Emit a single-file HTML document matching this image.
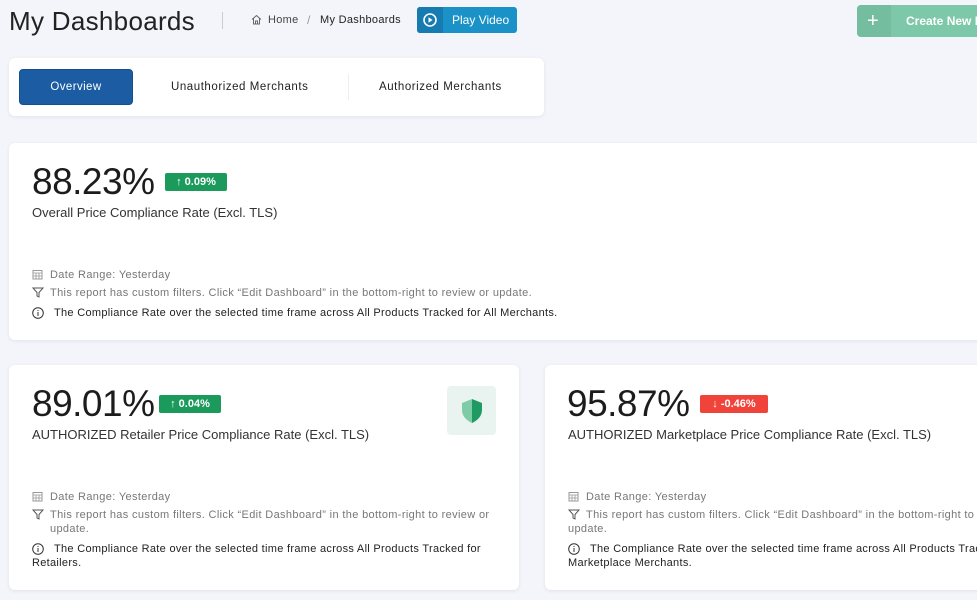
<!DOCTYPE html>
<html><head><style>
*{margin:0;padding:0;box-sizing:border-box}
body{width:977px;height:600px;overflow:hidden;background:#f4f5fa;font-family:"Liberation Sans",sans-serif;color:#222;position:relative}
.a{position:absolute;white-space:nowrap}
.card{position:absolute;background:#fff;border-radius:6px;box-shadow:0 1px 4px rgba(0,0,0,.08)}
.big{font-size:37px;color:#1c1c1c;letter-spacing:-0.5px}
.badge{position:absolute;height:18px;border-radius:2px;color:#fff;font-size:11px;font-weight:bold;line-height:18px;text-align:center;width:62px}
.sub{font-size:13px;color:#333}
.meta{font-size:11px;color:#777;letter-spacing:0.35px}
.info{font-size:11px;color:#222;letter-spacing:0.3px}
.tab{font-size:11.5px;letter-spacing:0.55px}
</style></head><body>
<div class="a" style="left:9px;top:6px;font-size:26px;color:#222;letter-spacing:0.3px">My Dashboards</div>
<div class="a" style="left:222px;top:12px;width:1px;height:17px;background:#ccc"></div>
<svg class="a" style="left:251px;top:14px" width="11" height="11" viewBox="0 0 11 11"><path d="M1 5.5L5.5 1.5 10 5.5M2.5 4.5V10h6V4.5M4.5 10V7h2v3" fill="none" stroke="#666" stroke-width="1"/></svg>
<div class="a" style="left:268px;top:14px;font-size:11px;color:#444;letter-spacing:0.3px">Home</div>
<div class="a" style="left:307px;top:13px;font-size:12px;color:#999">/</div>
<div class="a" style="left:320px;top:14px;font-size:11px;color:#222;letter-spacing:0.3px">My Dashboards</div>
<div class="a" style="left:417px;top:7px;width:100px;height:26px;border-radius:3px;background:#1a92c8;overflow:hidden">
<div style="position:absolute;left:0;top:0;width:26px;height:26px;background:#157bb0"></div>
<svg style="position:absolute;left:6px;top:6px" width="14" height="14" viewBox="0 0 14 14"><circle cx="7" cy="7" r="6" fill="none" stroke="#fff" stroke-width="1.6"/><path d="M5.5 4.3v5.4L9.6 7z" fill="#fff"/></svg>
<div style="position:absolute;left:35px;top:6px;font-size:12px;color:#fff">Play Video</div></div>
<div class="a" style="left:857px;top:5px;width:130px;height:32px;border-radius:4px;background:#7ec8aa;overflow:hidden">
<div style="position:absolute;left:0;top:0;width:34px;height:32px;background:#74bd9f"></div>
<div style="position:absolute;left:10px;top:5px;font-size:20px;color:#fff">+</div>
<div style="position:absolute;left:49px;top:9px;font-size:12px;font-weight:bold;color:#fff">Create New D</div></div>

<div class="card" style="left:9px;top:58px;width:535px;height:58px"></div>
<div class="a" style="left:19px;top:69px;width:114px;height:36px;background:#1b5ca2;border-radius:4px;border:1px solid #154e8c;color:#fff;font-size:11.5px;text-align:center;line-height:34px;letter-spacing:0.4px">Overview</div>
<div class="a tab" style="left:171px;top:81px">Unauthorized Merchants</div>
<div class="a" style="left:348px;top:74px;width:1px;height:26px;background:#eee"></div>
<div class="a tab" style="left:379px;top:81px">Authorized Merchants</div>

<div class="card" style="left:9px;top:143px;width:980px;height:197px"></div>
<div class="a big" style="left:32px;top:161px">88.23%</div>
<div class="badge" style="left:165px;top:173px;background:#1b9a5c">↑ 0.09%</div>
<div class="a sub" style="left:32px;top:205px">Overall Price Compliance Rate (Excl. TLS)</div>
<svg class="a" style="left:32px;top:269px" width="11" height="11" viewBox="0 0 11 11"><rect x="1" y="1.5" width="9" height="8.5" fill="none" stroke="#999"/><path d="M1 4h9M4 4v6M7 4v6M1 7h9" stroke="#999" stroke-width=".8"/></svg>
<div class="a meta" style="left:50px;top:269px">Date Range: Yesterday</div>
<svg class="a" style="left:32px;top:287px" width="12" height="11" viewBox="0 0 12 11"><path d="M1 1h10L7 5.5V10L5 9V5.5z" fill="none" stroke="#555"/></svg>
<div class="a meta" style="left:50px;top:287px">This report has custom filters. Click “Edit Dashboard” in the bottom-right to review or update.</div>
<svg class="a" style="left:32px;top:307px" width="12" height="12" viewBox="0 0 12 12"><circle cx="6" cy="6" r="5.3" fill="none" stroke="#333"/><path d="M6 5v4M6 3v1" stroke="#333"/></svg>
<div class="a info" style="left:54px;top:307px">The Compliance Rate over the selected time frame across All Products Tracked for All Merchants.</div>

<div class="card" style="left:9px;top:365px;width:510px;height:225px"></div>
<div class="a big" style="left:32px;top:383px">89.01%</div>
<div class="badge" style="left:159px;top:395px;background:#1b9a5c">↑ 0.04%</div>
<div class="a" style="left:447px;top:386px;width:49px;height:49px;border-radius:4px;background:#e9f4f0"></div>
<svg class="a" style="left:460px;top:398px" width="24" height="26" viewBox="0 0 24 26"><path d="M12 1L2 5v7c0 6 4.5 10.5 10 13z" fill="#7fcba7"/><path d="M12 1l10 4v7c0 6-4.5 10.5-10 13z" fill="#1e9a62"/></svg>
<div class="a sub" style="left:32px;top:427px">AUTHORIZED Retailer Price Compliance Rate (Excl. TLS)</div>
<svg class="a" style="left:32px;top:491px" width="11" height="11" viewBox="0 0 11 11"><rect x="1" y="1.5" width="9" height="8.5" fill="none" stroke="#999"/><path d="M1 4h9M4 4v6M7 4v6M1 7h9" stroke="#999" stroke-width=".8"/></svg>
<div class="a meta" style="left:50px;top:491px">Date Range: Yesterday</div>
<svg class="a" style="left:32px;top:509px" width="12" height="11" viewBox="0 0 12 11"><path d="M1 1h10L7 5.5V10L5 9V5.5z" fill="none" stroke="#555"/></svg>
<div class="a meta" style="left:50px;top:509px">This report has custom filters. Click “Edit Dashboard” in the bottom-right to review or</div>
<div class="a meta" style="left:50px;top:523px">update.</div>
<svg class="a" style="left:32px;top:543px" width="12" height="12" viewBox="0 0 12 12"><circle cx="6" cy="6" r="5.3" fill="none" stroke="#333"/><path d="M6 5v4M6 3v1" stroke="#333"/></svg>
<div class="a info" style="left:54px;top:543px">The Compliance Rate over the selected time frame across All Products Tracked for</div>
<div class="a info" style="left:32px;top:557px">Retailers.</div>

<div class="card" style="left:545px;top:365px;width:500px;height:225px"></div>
<div class="a big" style="left:567px;top:383px">95.87%</div>
<div class="badge" style="left:700px;top:395px;width:68px;background:#f0443a">↓ -0.46%</div>
<div class="a sub" style="left:568px;top:427px">AUTHORIZED Marketplace Price Compliance Rate (Excl. TLS)</div>
<svg class="a" style="left:568px;top:491px" width="11" height="11" viewBox="0 0 11 11"><rect x="1" y="1.5" width="9" height="8.5" fill="none" stroke="#999"/><path d="M1 4h9M4 4v6M7 4v6M1 7h9" stroke="#999" stroke-width=".8"/></svg>
<div class="a meta" style="left:586px;top:491px">Date Range: Yesterday</div>
<svg class="a" style="left:568px;top:509px" width="12" height="11" viewBox="0 0 12 11"><path d="M1 1h10L7 5.5V10L5 9V5.5z" fill="none" stroke="#555"/></svg>
<div class="a meta" style="left:586px;top:509px">This report has custom filters. Click “Edit Dashboard” in the bottom-right to review or</div>
<div class="a meta" style="left:568px;top:523px">update.</div>
<svg class="a" style="left:568px;top:543px" width="12" height="12" viewBox="0 0 12 12"><circle cx="6" cy="6" r="5.3" fill="none" stroke="#333"/><path d="M6 5v4M6 3v1" stroke="#333"/></svg>
<div class="a info" style="left:590px;top:543px">The Compliance Rate over the selected time frame across All Products Tracked for</div>
<div class="a info" style="left:568px;top:557px">Marketplace Merchants.</div>
</body></html>
